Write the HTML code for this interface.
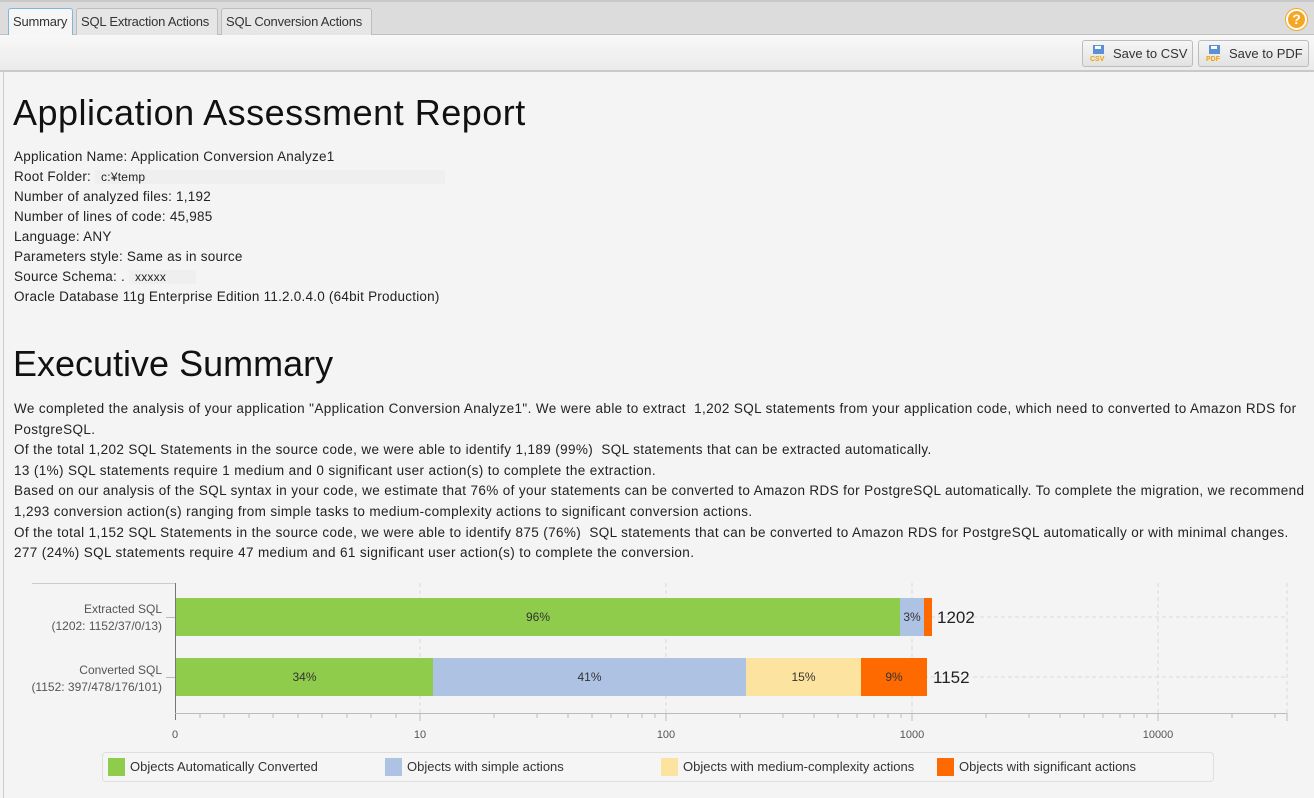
<!DOCTYPE html>
<html><head><meta charset="utf-8"><style>
*{margin:0;padding:0;box-sizing:border-box}
body{width:1314px;height:798px;background:#f4f4f4;font-family:"Liberation Sans","Noto Sans CJK JP",sans-serif;color:#222;position:relative;overflow:hidden}
.a{position:absolute;white-space:nowrap}
.tabbar{position:absolute;left:0;top:0;width:1314px;height:35px;background:#dcdcdc;border-top:2px solid #c8c8c8;border-bottom:1px solid #c0c0c0}
.tab{position:absolute;top:8px;height:27px;border:1px solid #bdbdbd;border-bottom:none;background:#e6e6e6;font-size:13px;line-height:25px;padding:0 4px;color:#333;border-radius:3px 3px 0 0;white-space:nowrap;overflow:hidden;letter-spacing:-0.2px}
.tool{position:absolute;left:0;top:35px;width:1314px;height:37px;background:linear-gradient(#f8f8f8,#ebebeb);border-bottom:2px solid #c9c9c9}
.btn{position:absolute;top:40px;height:27px;border:1px solid #bcbcbc;border-radius:3px;background:linear-gradient(#f6f6f6,#e2e2e2);font-size:13px;line-height:25px;color:#333;padding-left:30px;white-space:nowrap}
.ic{position:absolute;left:7px;top:4px;width:17px;height:17px}
.h1{font-size:36px;color:#111}
.t{font-size:13.5px;line-height:20px}
.seg{position:absolute;font-size:12px;color:#333;text-align:center;line-height:38px;height:38px}
</style></head><body>
<div class="tabbar"></div>
<div class="tab" style="left:8px;width:65px;background:#f6f6f6;border-color:#7ab8dc;height:28px">Summary</div>
<div class="tab" style="left:76px;width:142px">SQL Extraction Actions</div>
<div class="tab" style="left:221px;width:151px">SQL Conversion Actions</div>
<div class="a" style="left:1286px;top:9px;width:21px;height:21px;border-radius:50%;background:#f5a623;border:2px solid #fff;box-shadow:0 0 0 1px #f5a623;color:#fff;font-weight:bold;font-size:14px;text-align:center;line-height:17px">?</div>
<div class="tool"></div>
<div class="btn" style="left:1082px;width:111px"><svg class="ic" viewBox="0 0 17 17"><rect x="3" y="0" width="11" height="9" fill="#5b8fd6"/><rect x="5" y="1" width="6" height="3" fill="#fff"/><text x="0" y="16" font-size="7" font-weight="bold" fill="#f0a000" font-family="Liberation Sans">CSV</text></svg>Save to CSV</div>
<div class="btn" style="left:1198px;width:111px"><svg class="ic" viewBox="0 0 17 17"><rect x="3" y="0" width="11" height="9" fill="#5b8fd6"/><rect x="5" y="1" width="6" height="3" fill="#fff"/><text x="0" y="16" font-size="7" font-weight="bold" fill="#f0a000" font-family="Liberation Sans">PDF</text></svg>Save to PDF</div>
<div class="a" style="left:3px;top:72px;width:1px;height:726px;background:#ccc"></div>

<div class="a h1" style="left:13px;top:92px;letter-spacing:0.5px">Application Assessment Report</div>
<div class="a t" style="left:14px;top:147px;letter-spacing:0.23px">Application Name: Application Conversion Analyze1<br>Root Folder: <span style="background:#efefef;padding:0 300px 0 6px;font-size:12px">c:¥temp</span><br>Number of analyzed files: 1,192<br>Number of lines of code: 45,985<br>Language: ANY<br>Parameters style: Same as in source<br>Source Schema: . <span style="background:#efefef;padding:0 30px 0 6px;font-size:12px">xxxxx</span><br>Oracle Database 11g Enterprise Edition 11.2.0.4.0 (64bit Production)</div>

<div class="a h1" style="left:13px;top:343px">Executive Summary</div>
<div class="a t" style="left:14px;top:399px;line-height:20.6px;letter-spacing:0.37px">We completed the analysis of your application "Application Conversion Analyze1". We were able to extract &nbsp;1,202 SQL statements from your application code, which need to converted to Amazon RDS for<br>PostgreSQL.<br>Of the total 1,202 SQL Statements in the source code, we were able to identify 1,189 (99%) &nbsp;SQL statements that can be extracted automatically.<br>13 (1%) SQL statements require 1 medium and 0 significant user action(s) to complete the extraction.<br>Based on our analysis of the SQL syntax in your code, we estimate that 76% of your statements can be converted to Amazon RDS for PostgreSQL automatically. To complete the migration, we recommend<br>1,293 conversion action(s) ranging from simple tasks to medium-complexity actions to significant conversion actions.<br>Of the total 1,152 SQL Statements in the source code, we were able to identify 875 (76%) &nbsp;SQL statements that can be converted to Amazon RDS for PostgreSQL automatically or with minimal changes.<br>277 (24%) SQL statements require 47 medium and 61 significant user action(s) to complete the conversion.</div>

<svg class="a" style="left:0;top:580px" width="1314" height="170">
<g stroke="#dadada" stroke-dasharray="4,3">
<line x1="420" y1="3" x2="420" y2="133"/><line x1="666" y1="3" x2="666" y2="133"/><line x1="912" y1="3" x2="912" y2="133"/><line x1="1158" y1="3" x2="1158" y2="133"/><line x1="1287" y1="3" x2="1287" y2="133"/>
<line x1="175" y1="37" x2="1287" y2="37"/><line x1="175" y1="97" x2="1287" y2="97"/>
</g>
<line x1="32" y1="3.5" x2="175" y2="3.5" stroke="#ccc"/>
<line x1="175.5" y1="3" x2="175.5" y2="140" stroke="#777"/>
<line x1="175" y1="133.5" x2="1287" y2="133.5" stroke="#bbb"/>
<line x1="166" y1="37.5" x2="175" y2="37.5" stroke="#bbb"/><line x1="166" y1="97.5" x2="175" y2="97.5" stroke="#bbb"/>
<g stroke="#bbb">
<line x1="200" y1="133" x2="200" y2="138"/><line x1="224" y1="133" x2="224" y2="138"/><line x1="249" y1="133" x2="249" y2="138"/><line x1="273" y1="133" x2="273" y2="138"/><line x1="298" y1="133" x2="298" y2="138"/><line x1="322" y1="133" x2="322" y2="138"/><line x1="347" y1="133" x2="347" y2="138"/><line x1="371" y1="133" x2="371" y2="138"/><line x1="396" y1="133" x2="396" y2="138"/>
<line x1="420" y1="133" x2="420" y2="141"/><line x1="666" y1="133" x2="666" y2="141"/><line x1="912" y1="133" x2="912" y2="141"/><line x1="1158" y1="133" x2="1158" y2="141"/><line x1="1287" y1="133" x2="1287" y2="141"/>
<line x1="494" y1="133" x2="494" y2="138"/><line x1="537" y1="133" x2="537" y2="138"/><line x1="568" y1="133" x2="568" y2="138"/><line x1="592" y1="133" x2="592" y2="138"/><line x1="611" y1="133" x2="611" y2="138"/><line x1="628" y1="133" x2="628" y2="138"/><line x1="642" y1="133" x2="642" y2="138"/><line x1="655" y1="133" x2="655" y2="138"/>
<line x1="740" y1="133" x2="740" y2="138"/><line x1="783" y1="133" x2="783" y2="138"/><line x1="814" y1="133" x2="814" y2="138"/><line x1="838" y1="133" x2="838" y2="138"/><line x1="857" y1="133" x2="857" y2="138"/><line x1="874" y1="133" x2="874" y2="138"/><line x1="888" y1="133" x2="888" y2="138"/><line x1="901" y1="133" x2="901" y2="138"/>
<line x1="986" y1="133" x2="986" y2="138"/><line x1="1029" y1="133" x2="1029" y2="138"/><line x1="1060" y1="133" x2="1060" y2="138"/><line x1="1084" y1="133" x2="1084" y2="138"/><line x1="1103" y1="133" x2="1103" y2="138"/><line x1="1120" y1="133" x2="1120" y2="138"/><line x1="1134" y1="133" x2="1134" y2="138"/><line x1="1147" y1="133" x2="1147" y2="138"/>
<line x1="1232" y1="133" x2="1232" y2="138"/><line x1="1275" y1="133" x2="1275" y2="138"/>
</g>
<g font-family="Liberation Sans" font-size="11" fill="#555" text-anchor="middle">
<text x="175" y="158">0</text><text x="420" y="158">10</text><text x="666" y="158">100</text><text x="912" y="158">1000</text><text x="1158" y="158">10000</text>
</g>
<g font-family="Liberation Sans" font-size="12" fill="#555" text-anchor="end">
<text x="162" y="33">Extracted SQL</text><text x="162" y="50">(1202: 1152/37/0/13)</text>
<text x="162" y="94">Converted SQL</text><text x="162" y="111">(1152: 397/478/176/101)</text>
</g>
</svg>
<div class="seg" style="left:176px;top:598px;width:724px;background:#8fcc4c">96%</div>
<div class="seg" style="left:900px;top:598px;width:24px;background:#aec3e3">3%</div>
<div class="seg" style="left:924px;top:598px;width:8px;background:#ff6a00"></div>
<div class="a" style="left:937px;top:608px;font-size:17px;color:#222">1202</div>
<div class="seg" style="left:176px;top:658px;width:257px;background:#8fcc4c">34%</div>
<div class="seg" style="left:433px;top:658px;width:313px;background:#aec3e3">41%</div>
<div class="seg" style="left:746px;top:658px;width:115px;background:#fde3a0">15%</div>
<div class="seg" style="left:861px;top:658px;width:66px;background:#ff6a00">9%</div>
<div class="a" style="left:933px;top:668px;font-size:17px;color:#222">1152</div>

<div class="a" style="left:102px;top:752px;width:1112px;height:30px;border:1px solid #dedede;border-radius:4px;background:#f5f5f5"></div>
<div class="a" style="left:108px;top:758px;width:17px;height:18px;background:#8fcc4c"></div>
<div class="a" style="left:130px;top:759px;font-size:13px;color:#333">Objects Automatically Converted</div>
<div class="a" style="left:385px;top:758px;width:17px;height:18px;background:#aec3e3"></div>
<div class="a" style="left:407px;top:759px;font-size:13px;color:#333">Objects with simple actions</div>
<div class="a" style="left:661px;top:758px;width:17px;height:18px;background:#fde3a0"></div>
<div class="a" style="left:683px;top:759px;font-size:13px;color:#333">Objects with medium-complexity actions</div>
<div class="a" style="left:937px;top:758px;width:17px;height:18px;background:#ff6a00"></div>
<div class="a" style="left:959px;top:759px;font-size:13px;color:#333">Objects with significant actions</div>
</body></html>
